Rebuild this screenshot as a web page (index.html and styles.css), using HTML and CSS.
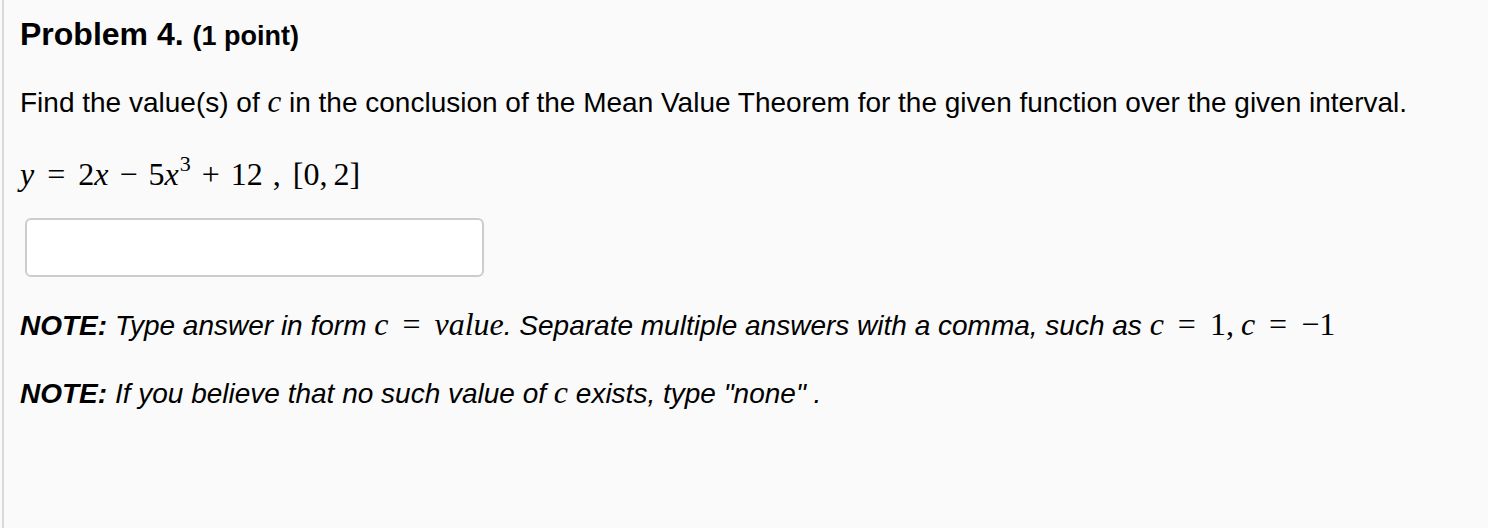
FILE: index.html
```html
<!DOCTYPE html>
<html>
<head>
<meta charset="utf-8">
<link rel="stylesheet" href="styles.css">
</head>
<body>
<div class="page">
  <div class="problem">
    <h3 class="title">Problem 4. <span class="pts">(1 point)</span></h3>
    <p class="text">Find the value(s) of <span class="mc">c</span> in the conclusion of the Mean Value Theorem for the given function over the given interval.</p>
    <p class="eq"><span class="m"><span class="mi">y</span><span class="rel">=</span>2<span class="mi">x</span><span class="bin">−</span>5<span class="mi">x</span><sup>3</sup><span class="bin">+</span>12</span><span class="sep">,</span><span class="m">[0<span class="comma">,</span>2]</span></p>
    <div class="answer"><input class="box" type="text"></div>
    <p class="note"><b>NOTE:</b> Type answer in form <span class="m"><span class="mi">c</span><span class="rel">=</span><span class="mi">value</span></span>. Separate multiple answers with a comma, such as <span class="m"><span class="mi">c</span><span class="rel">=</span>1<span class="comma">,</span><span class="mi">c</span><span class="rel">=</span>−1</span></p>
    <p class="note note2"><b>NOTE:</b> If you believe that no such value of <span class="m"><span class="mi">c</span></span> exists, type "none" .</p>
  </div>
</div>
</body>
</html>
```
FILE: styles.css
```css
html, body {
  margin: 0;
  padding: 0;
  background: #fafafa;
}
.page {
  height: 528px;
  box-sizing: border-box;
  padding-left: 2px;
}
.problem {
  height: 100%;
  box-sizing: border-box;
  border-left: 2px solid #d9d9d9;
  padding: 16px 0 0 16px;
  font-family: "Liberation Sans", Arial, sans-serif;
  color: #000;
}
.title {
  margin: 0;
  font-size: 32px;
  font-weight: bold;
  line-height: 36px;
}
.pts {
  font-size: 27px;
}
.text {
  margin: 32px 0 0 0;
  font-size: 28px;
  line-height: 34px;
}
.mc {
  font-family: "Liberation Serif", serif;
  font-style: italic;
  font-size: 31px;
  line-height: 1;
}
.m {
  font-family: "Liberation Serif", serif;
  font-style: normal;
  font-size: 32px;
  line-height: 1;
}
.mi {
  font-style: italic;
}
.rel {
  margin: 0 13px;
}
.bin {
  margin: 0 11px;
}
.comma {
  margin-right: 6px;
}
.eq {
  margin: 34px 0 0 0;
  font-family: "Liberation Serif", serif;
  font-size: 32px;
  line-height: 40px;
}
.eq sup {
  font-size: 22px;
  line-height: 0;
  vertical-align: 14px;
  margin-left: 1px;
}
.sep {
  margin: 0 12px 0 10px;
}
.answer {
  margin-top: 24px;
}
.box {
  display: block;
  width: 459px;
  height: 59px;
  box-sizing: border-box;
  margin: 0 0 0 5px;
  border: 2px solid #cccccc;
  border-radius: 6px;
  background: #fff;
  outline: none;
}
.note {
  margin: 29px 0 0 0;
  font-size: 28px;
  font-style: italic;
  line-height: 40px;
}
.note b {
  font-weight: bold;
}
.note .rel {
  margin: 0 14px;
}
.note .comma {
  margin-right: 7px;
}
.note2 {
  margin-top: 28px;
}
```
